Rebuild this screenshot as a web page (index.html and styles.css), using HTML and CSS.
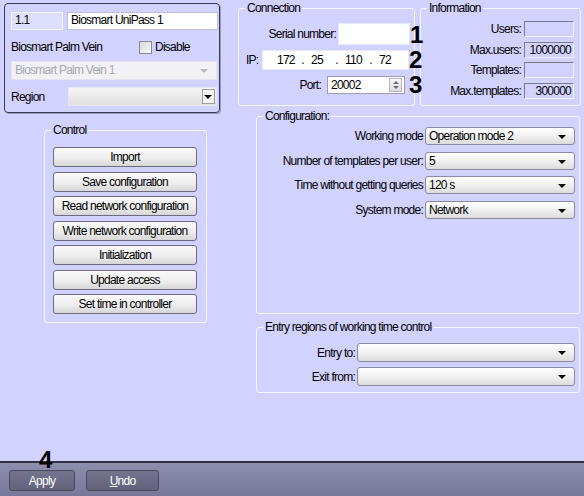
FILE: index.html
```html
<!DOCTYPE html>
<html lang="en">
<head>
    <meta charset="UTF-8">
    <title>Biosmart UniPass settings</title>
    <link rel="stylesheet" href="styles.css">
</head>
<body>
    <div class="window">
        <div class="main">
            <div class="left">
                <div class="device">
                    <div class="device-row">
                        <div class="field field-id">1.1</div>
                        <div class="field field-name">Biosmart UniPass 1</div>
                    </div>
                    <div class="device-row type-row">
                        <span class="type-name">Biosmart Palm Vein</span>
                        <label class="check"><span class="check-box"></span>Disable</label>
                    </div>
                    <div class="combo combo-disabled">Biosmart Palm Vein 1<span class="arrow"></span></div>
                    <div class="device-row region-row">
                        <span class="region-label">Region</span>
                        <div class="combo combo-region"><span class="arrow-btn"><span class="arrow"></span></span></div>
                    </div>
                </div>

                <div class="group control">
                    <span class="group-title">Control</span>
                    <div class="buttons">
                        <button class="btn">Import</button>
                        <button class="btn">Save configuration</button>
                        <button class="btn">Read network configuration</button>
                        <button class="btn">Write network configuration</button>
                        <button class="btn">Initialization</button>
                        <button class="btn">Update access</button>
                        <button class="btn">Set time in controller</button>
                    </div>
                </div>
            </div>

            <div class="right">
                <div class="top-row">
                    <div class="group connection">
                        <span class="group-title">Connection</span>
                        <div class="conn-row serial-row">
                            <span class="lbl">Serial number:</span>
                            <div class="field serial"></div>
                        </div>
                        <div class="conn-row ip-row">
                            <span class="lbl ip-lbl">IP:</span>
                            <div class="field ip">
                                <span class="oct">172</span><span class="dot">.</span><span class="oct">25</span><span class="dot">.</span><span class="oct">110</span><span class="dot">.</span><span class="oct">72</span>
                            </div>
                        </div>
                        <div class="conn-row port-row">
                            <span class="lbl">Port:</span>
                            <div class="field spin">20002<span class="spin-btn"><span class="up"></span><span class="down"></span></span></div>
                        </div>
                    </div>

                    <div class="group information">
                        <span class="group-title">Information</span>
                        <div class="info-row"><span class="lbl">Users:</span><div class="info-box"></div></div>
                        <div class="info-row"><span class="lbl">Max.users:</span><div class="info-box">1000000</div></div>
                        <div class="info-row"><span class="lbl">Templates:</span><div class="info-box"></div></div>
                        <div class="info-row"><span class="lbl">Max.templates:</span><div class="info-box">300000</div></div>
                    </div>
                </div>

                <div class="group configuration">
                    <span class="group-title">Configuration:</span>
                    <div class="cfg-row"><span class="lbl">Working mode</span><div class="combo cfg-combo">Operation mode 2<span class="arrow"></span></div></div>
                    <div class="cfg-row"><span class="lbl">Number of templates per user:</span><div class="combo cfg-combo">5<span class="arrow"></span></div></div>
                    <div class="cfg-row"><span class="lbl">Time without getting queries</span><div class="combo cfg-combo">120 s<span class="arrow"></span></div></div>
                    <div class="cfg-row"><span class="lbl">System mode:</span><div class="combo cfg-combo">Network<span class="arrow"></span></div></div>
                </div>

                <div class="group entry">
                    <span class="group-title">Entry regions of working time control</span>
                    <div class="entry-row"><span class="lbl">Entry to:</span><div class="combo entry-combo"><span class="arrow"></span></div></div>
                    <div class="entry-row"><span class="lbl">Exit from:</span><div class="combo entry-combo"><span class="arrow"></span></div></div>
                </div>
            </div>

            <span class="mark mark-1">1</span>
            <span class="mark mark-2">2</span>
            <span class="mark mark-3">3</span>
        </div>

        <div class="footer">
            <button class="footer-btn apply">Apply</button>
            <button class="footer-btn undo"><u>U</u>ndo</button>
        </div>
        <span class="mark mark-4">4</span>
    </div>
</body>
</html>
```

FILE: styles.css
```css
body {
    margin: 0;
    font-family: "Liberation Sans", Arial, sans-serif;
    font-size: 12px;
    letter-spacing: -0.75px;
    color: #000;
    background-color: #d2d2fe;
}
.window {
    position: relative;
    width: 584px;
    height: 496px;
    display: flex;
    flex-direction: column;
}
.main {
    position: relative;
    height: 461px;
    display: flex;
}

/* left column */
.left {
    width: 234px;
    padding: 3px 0 0 4px;
}
.device {
    width: 216px;
    height: 110px;
    box-sizing: border-box;
    border: 1px solid #3a3a52;
    border-radius: 4px;
    box-shadow: 1px 1px 0 #9a9ac0;
    padding: 8px 0 0 6px;
}
.device-row {
    display: flex;
    align-items: center;
}
.field {
    box-sizing: border-box;
    background-color: #fff;
    border: 1px solid #c0c0dc;
    line-height: 15px;
    padding: 0 3px;
    white-space: nowrap;
}
.field-id {
    width: 52px;
    height: 18px;
    background-color: #dedeff;
    border-color: #f4f4ff;
}
.field-name {
    width: 151px;
    height: 18px;
    margin-left: 4px;
}
.type-row {
    margin-top: 10px;
    height: 14px;
}
.type-name {
    width: 128px;
}
.check {
    display: flex;
    align-items: center;
}
.check-box {
    width: 11px;
    height: 11px;
    border: 1px solid #8a8a9a;
    background: linear-gradient(135deg, #d8d8d8, #fbfbfb);
    margin-right: 3px;
}
.combo {
    position: relative;
    box-sizing: border-box;
    height: 19px;
    line-height: 17px;
    padding-left: 3px;
    border: 1px solid #8a8aa0;
    border-radius: 3px;
    background: linear-gradient(#ffffff, #f0f0f0 50%, #dcdcdc);
    white-space: nowrap;
}
.arrow {
    position: absolute;
    right: 8px;
    top: 7px;
    border-left: 4px solid transparent;
    border-right: 4px solid transparent;
    border-top: 4px solid #000;
}
.combo-disabled {
    width: 206px;
    margin-top: 7px;
    color: #a8a8b0;
    border-color: #e4e4f0;
    border-radius: 0;
    background: #f2f2f6;
}
.combo-disabled .arrow {
    border-top-color: #b8b8c4;
}
.region-row {
    margin-top: 7px;
}
.region-label {
    width: 57px;
}
.combo-region {
    width: 149px;
    border-radius: 0;
    border-color: #e6e6f2;
    background: linear-gradient(#f6f6f6, #dedede);
}
.arrow-btn {
    position: absolute;
    right: 1px;
    top: 1px;
    width: 13px;
    height: 15px;
    box-sizing: border-box;
    border: 1px solid #a0a0a0;
    background-color: #f4f4f4;
}
.arrow-btn .arrow {
    right: 2px;
    top: 5px;
}

/* group frames */
.group {
    position: relative;
    box-sizing: border-box;
    border: 1px solid #f6f6ff;
    border-radius: 3px;
}
.group-title {
    position: absolute;
    top: -8px;
    left: 6px;
    padding: 0 2px;
    line-height: 14px;
    background-color: #d2d2fe;
}
.lbl {
    white-space: nowrap;
}
.control {
    width: 163px;
    height: 193px;
    margin: 17px 0 0 40px;
    padding: 16px 0 0 8px;
}
.buttons {
    display: flex;
    flex-direction: column;
    gap: 4.5px;
}
.btn {
    width: 144px;
    height: 20px;
    padding: 0;
    font: inherit;
    letter-spacing: inherit;
    white-space: nowrap;
    color: #000;
    border: 1px solid #6c6c7c;
    border-radius: 3px;
    background: linear-gradient(#fafafa, #ececec 60%, #d6d6d6);
}

/* right column */
.right {
    padding-top: 8px;
}
.top-row {
    display: flex;
    gap: 5px;
}
.connection {
    width: 177px;
    height: 98px;
    padding: 14px 0 0 7px;
}
.conn-row {
    display: flex;
    align-items: center;
    justify-content: flex-end;
}
.conn-row .lbl {
    margin-right: 2px;
}
.serial {
    width: 72px;
    height: 22px;
    margin-right: 4px;
    border-color: #e8e8f8;
}
.ip-row {
    margin-top: 5px;
    justify-content: flex-start;
}
.ip-lbl {
    width: 14px;
}
.ip {
    display: flex;
    width: 147px;
    height: 20px;
    line-height: 18px;
    border-color: #e8e8f8;
    padding: 0 0 0 14px;
}
.oct {
    width: 17px;
}
.dot {
    width: 17px;
    text-align: center;
}
.port-row {
    margin-top: 6px;
}
.port-row .lbl {
    margin-right: 6px;
}
.spin {
    position: relative;
    width: 78px;
    height: 18px;
    margin-right: 9px;
    border-color: #9c9cb8;
    line-height: 16px;
}
.spin-btn {
    position: absolute;
    right: 2px;
    top: 1px;
    width: 13px;
    height: 14px;
    box-sizing: border-box;
    border: 1px solid #b4b4c4;
    background: linear-gradient(#f6f6f6, #dcdce4);
}
.up, .down {
    position: absolute;
    left: 3px;
    border-left: 3px solid transparent;
    border-right: 3px solid transparent;
}
.up {
    top: 2px;
    border-bottom: 3px solid #6c6c80;
}
.down {
    bottom: 2px;
    border-top: 3px solid #6c6c80;
}

.information {
    width: 161px;
    height: 98px;
    padding: 12px 6px 0 0;
    display: flex;
    flex-direction: column;
    gap: 4.5px;
}
.info-row {
    display: flex;
    justify-content: flex-end;
    align-items: center;
}
.info-row .lbl {
    margin-right: 3px;
}
.info-box {
    box-sizing: border-box;
    width: 50px;
    height: 16px;
    line-height: 14px;
    text-align: right;
    padding-right: 2px;
    border: 1px solid;
    border-color: #7c7c8c #f0f0ff #f0f0ff #7c7c8c;
}

.configuration {
    width: 324px;
    height: 198px;
    margin: 10px 0 0 18px;
    padding: 10px 4px 0 0;
    display: flex;
    flex-direction: column;
    gap: 6.5px;
}
.cfg-row, .entry-row {
    display: flex;
    justify-content: flex-end;
    align-items: center;
}
.cfg-row .lbl, .entry-row .lbl {
    margin-right: 2px;
}
.cfg-combo {
    width: 150px;
    height: 18px;
    line-height: 16px;
}
.entry {
    width: 324px;
    height: 66px;
    margin: 13px 0 0 18px;
    padding: 15px 4px 0 0;
    display: flex;
    flex-direction: column;
    gap: 5px;
}
.entry-combo {
    width: 218px;
}

/* bottom bar */
.footer {
    flex: 1;
    display: flex;
    gap: 11px;
    padding: 7px 0 0 9px;
    border-top: 2px solid #303044;
    background: linear-gradient(#8e8eae, #77779a);
}
.footer-btn {
    height: 21px;
    padding: 0;
    font: inherit;
    letter-spacing: inherit;
    color: #fff;
    border: 1px solid #4a4a62;
    border-radius: 3px;
    background: linear-gradient(#74748e, #62627c);
}
.apply {
    width: 66px;
}
.undo {
    width: 73px;
}

/* annotation numbers */
.mark {
    position: absolute;
    font-size: 24px;
    font-weight: bold;
    letter-spacing: 0;
    line-height: 20px;
    color: #000;
}
.mark-1 { left: 410px; top: 25px; }
.mark-2 { left: 409px; top: 50px; }
.mark-3 { left: 409px; top: 75px; }
.mark-4 { left: 39px; top: 450px; }
```
